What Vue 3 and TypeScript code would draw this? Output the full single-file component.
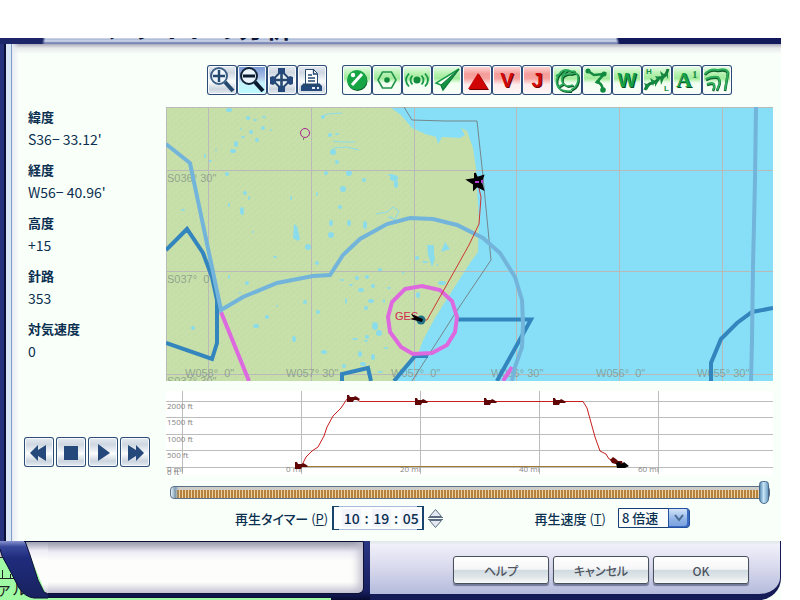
<script setup lang="ts">
import { ref } from 'vue'

interface Reading {
  label: string
  value: string
}

interface MapLabel {
  x: number
  y: number
  text: string
}

const readings: Reading[] = [
  { label: '緯度', value: "S36− 33.12'" },
  { label: '経度', value: "W56− 40.96'" },
  { label: '高度', value: '+15' },
  { label: '針路', value: '353' },
  { label: '対気速度', value: '0' },
]

const meridians = [208.5, 311.5, 414.5, 516.5, 619.5, 722.5]
const parallels = [170.5, 271.5, 374.5]

const mapLabels: MapLabel[] = [
  { x: 167, y: 182, text: 'S036° 30"' },
  { x: 167, y: 283, text: 'S037°  0"' },
  { x: 167, y: 385, text: 'S037° 30"' },
  { x: 185, y: 377, text: 'W058°  0"' },
  { x: 286, y: 377, text: 'W057° 30"' },
  { x: 391, y: 377, text: 'W057°  0"' },
  { x: 491, y: 377, text: 'W056° 30"' },
  { x: 596, y: 377, text: 'W056°  0"' },
  { x: 697, y: 377, text: 'W055° 30"' },
]

// Ponds on the plain: x, y, half width, half height
const ponds: number[][] = [
  [229, 110, 3, 2], [248, 118, 2, 2], [255, 120, 2, 1], [264, 117, 2, 1], [241, 129, 1, 1],
  [251, 132, 2, 2], [263, 128, 2, 2], [257, 140, 2, 2], [271, 130, 1, 1], [243, 137, 2, 1],
  [236, 144, 2, 3], [233, 151, 3, 2], [205, 156, 1, 2], [210, 161, 2, 1], [216, 150, 1, 1],
  [227, 174, 2, 2], [323, 117, 2, 2], [330, 135, 2, 2], [337, 134, 2, 1], [333, 152, 3, 3],
  [337, 162, 2, 2], [349, 173, 3, 3], [343, 189, 3, 3], [340, 207, 2, 2], [349, 223, 2, 3],
  [331, 223, 2, 3], [331, 235, 3, 3], [308, 247, 3, 3], [275, 257, 2, 1], [317, 263, 2, 2],
  [242, 211, 2, 4], [229, 205, 1, 2], [245, 193, 2, 2], [249, 198, 1, 2], [253, 232, 1, 1],
  [291, 198, 1, 2], [317, 194, 1, 2], [326, 173, 2, 2], [364, 180, 2, 2], [365, 225, 2, 4],
  [229, 277, 1, 2], [247, 283, 2, 2], [240, 293, 1, 1], [267, 317, 2, 2], [256, 326, 3, 2],
  [193, 328, 2, 2], [277, 306, 1, 1], [294, 339, 2, 3], [305, 302, 2, 2], [318, 312, 2, 2],
  [346, 301, 1, 3], [342, 280, 2, 1], [351, 285, 2, 1], [357, 278, 2, 2], [361, 290, 3, 2],
  [367, 277, 2, 2], [324, 352, 3, 2], [355, 339, 3, 1], [360, 354, 2, 3], [367, 337, 2, 2],
  [344, 366, 2, 2], [363, 364, 3, 2], [366, 341, 2, 1], [183, 210, 2, 1], [394, 178, 4, 3],
  [396, 184, 2, 4], [391, 175, 3, 1], [442, 283, 4, 2], [418, 295, 2, 3], [425, 262, 3, 1],
  [375, 326, 3, 4], [379, 333, 3, 3], [371, 301, 3, 2], [366, 308, 2, 2], [384, 301, 1, 2],
  [380, 270, 2, 2], [373, 286, 2, 2], [389, 288, 2, 1], [403, 273, 1, 1], [373, 357, 2, 3],
  [386, 348, 2, 1], [380, 372, 3, 1], [417, 258, 2, 2], [437, 265, 1, 1],
]

const altitudes = [
  { y: 401.5, text: '2000 ft' },
  { y: 417.5, text: '1500 ft' },
  { y: 434.5, text: '1000 ft' },
  { y: 450.5, text: '500 ft' },
  { y: 467.5, text: '0 ft' },
]

const distances = [
  { x: 182.5, label: 167, text: '0 mi' },
  { x: 301.5, label: 286, text: '0 mi' },
  { x: 420.5, label: 400, text: '20 mi' },
  { x: 539.5, label: 519, text: '40 mi' },
  { x: 658.5, label: 638, text: '60 mi' },
]

const profilePlanes = [
  [301, 465], [353, 398], [421, 401], [490, 401], [559, 401],
]

const position = ref(100)
const hours = ref('10')
const minutes = ref('19')
const seconds = ref('05')
const speed = ref('8 倍速')

function shiftSeconds(step: number): void {
  const total = Number(hours.value) * 3600 + Number(minutes.value) * 60 + Number(seconds.value) + step
  const day = (total + 86400) % 86400
  hours.value = String(Math.floor(day / 3600)).padStart(2, '0')
  minutes.value = String(Math.floor(day / 60) % 60).padStart(2, '0')
  seconds.value = String(day % 60).padStart(2, '0')
}
</script>

<template>
  <div class="screen">
    <div class="dialog">
      <header class="title-bar">
        <h1 class="title">フライトの分析</h1>
      </header>

      <div class="body">
        <aside class="sidebar">
          <dl class="readings">
            <div v-for="item in readings" :key="item.label" class="reading">
              <dt>{{ item.label }}</dt>
              <dd>{{ item.value }}</dd>
            </div>
          </dl>
          <div class="transport">
            <button type="button" class="tool" aria-label="巻き戻し">
              <svg viewBox="0 0 30 30"><path class="solid" d="M14 8v5l8-5v16l-8-5v5L6 16z" /></svg>
            </button>
            <button type="button" class="tool" aria-label="停止">
              <svg viewBox="0 0 30 30"><path class="solid" d="M8 9h14v14H8z" /></svg>
            </button>
            <button type="button" class="tool" aria-label="再生">
              <svg viewBox="0 0 30 30"><path class="solid" d="M10 7l12 9-12 8z" /></svg>
            </button>
            <button type="button" class="tool" aria-label="早送り">
              <svg viewBox="0 0 30 30"><path class="solid" d="M8 8l8 5V8l8 8-8 8v-5l-8 5z" /></svg>
            </button>
          </div>
        </aside>

        <main class="main">
          <div class="toolbar">
            <div class="tool-group">
              <button type="button" class="tool" aria-label="拡大">
                <svg viewBox="0 0 30 30">
                  <path d="M18 17l8 9" stroke="#25486f" stroke-width="4" />
                  <circle cx="12" cy="11" r="8" fill="#eef5fb" stroke="#3c5f87" stroke-width="2" />
                  <path d="M12 5v12M6 11h12" stroke="#25486f" stroke-width="2.4" />
                </svg>
              </button>
              <button type="button" class="tool active" aria-label="縮小">
                <svg viewBox="0 0 30 30">
                  <path d="M18 17l8 9" stroke="#0a1b30" stroke-width="4" />
                  <circle cx="12" cy="11" r="8" fill="#e9f4fc" stroke="#0f2238" stroke-width="2" />
                  <path d="M6 11h12" stroke="#0a1b30" stroke-width="3" />
                </svg>
              </button>
              <button type="button" class="tool" aria-label="移動">
                <svg viewBox="0 0 30 30">
                  <path d="M14.500 6l9 9-9 9-9-9z" fill="#eef3f8" stroke="#27496f" stroke-width="2" />
                  <path d="M14.500 9v12M8 15h13" stroke="#27496f" stroke-width="2.6" />
                  <path class="solid" d="M11 3h7v5l-2 1h-3l-2-1zM11 27h7v-5l-2-1h-3l-2 1zM3 12v7l3 1 3-2v-5l-3-2zM26 12v7l-3 1-3-2v-5l3-2z" />
                </svg>
              </button>
              <button type="button" class="tool" aria-label="印刷">
                <svg viewBox="0 0 30 30">
                  <path class="solid" d="M6 19h17l2 2v5H4v-5z" />
                  <path d="M8.500 4.500h8l4 4V20h-12z" fill="#fff" stroke="#25486f" />
                  <path d="M16.500 4v5h4M11 10h4M11 13h7M11 16h7" fill="none" stroke="#25486f" stroke-width="1.300" />
                  <path d="M6 20h17" stroke="#25486f" stroke-width="3" />
                  <path d="M15 23h3M20 23h2" stroke="#e5eef8" stroke-width="2" />
                </svg>
              </button>
            </div>

            <div class="tool-group">
              <button type="button" class="tool green" aria-label="空港">
                <svg viewBox="0 0 30 30">
                  <circle cx="15.500" cy="16" r="10" fill="#0b5b2a" />
                  <circle cx="15" cy="15" r="10" fill="#15a545" />
                  <path d="M10 20L20 9" stroke="#fff" stroke-width="3" />
                  <circle cx="11" cy="10" r="2.200" fill="#fff" />
                </svg>
              </button>
              <button type="button" class="tool green" aria-label="VOR">
                <svg viewBox="0 0 30 30">
                  <path d="M10.500 7h9l4.500 8-4.500 8h-9L6 15z" fill="none" stroke="#22934d" stroke-width="1.600" />
                  <circle cx="15" cy="15" r="2.800" fill="#128a3c" />
                </svg>
              </button>
              <button type="button" class="tool green" aria-label="NDB">
                <svg viewBox="0 0 30 30">
                  <circle cx="15" cy="15" r="3.500" fill="#128a3c" />
                  <path d="M10.500 10.500q-4 4.500 0 9M7 8.500q-6 6.500 0 13M19.500 10.500q4 4.500 0 9M23 8.500q6 6.500 0 13" fill="none" stroke="#1a9a48" stroke-width="1.800" />
                </svg>
              </button>
              <button type="button" class="tool green" aria-label="進入経路">
                <svg viewBox="0 0 30 30">
                  <path d="M27 4L4 18l5 2 2 5z" fill="#f4fff4" stroke="#179c48" stroke-width="1.500" />
                  <path d="M27 4L9 20l2 5z" fill="#159344" stroke="#12753a" stroke-width="1" />
                </svg>
              </button>
              <button type="button" class="tool red" aria-label="障害物">
                <svg viewBox="0 0 30 30">
                  <path d="M17 9l10 16H7z" fill="#690000" />
                  <path d="M16 8l10 16H6z" fill="#cf0505" />
                </svg>
              </button>
              <button type="button" class="tool red" aria-label="ビクター航空路">
                <svg viewBox="0 0 30 30">
                  <text class="glyph shadow-red" x="16" y="23">V</text>
                  <text class="glyph fill-red" x="15" y="22">V</text>
                </svg>
              </button>
              <button type="button" class="tool red" aria-label="ジェット航空路">
                <svg viewBox="0 0 30 30">
                  <text class="glyph shadow-red" x="16" y="23">J</text>
                  <text class="glyph fill-red" x="15" y="22">J</text>
                </svg>
              </button>
              <button type="button" class="tool green" aria-label="空域">
                <svg viewBox="0 0 30 30">
                  <path d="M23 6q-4 1-7-1-5-1-8 3-6 7-2 14 4 5 13 4M20 9q-8-1-10 4-1 6 5 8 3 0 6-1M16 5q-6 4-6 8M20 9q5-3 6 3 1 9-7 13M4 11l5-3M6 22l5-3" transform="translate(1 1)" fill="none" stroke="#0d592b" stroke-width="1.800" />
                  <path d="M23 6q-4 1-7-1-5-1-8 3-6 7-2 14 4 5 13 4M20 9q-8-1-10 4-1 6 5 8 3 0 6-1M16 5q-6 4-6 8M20 9q5-3 6 3 1 9-7 13M4 11l5-3M6 22l5-3" fill="none" stroke="#2bab59" stroke-width="1.700" />
                </svg>
              </button>
              <button type="button" class="tool green" aria-label="飛行経路">
                <svg viewBox="0 0 30 30">
                  <path d="M6 6l6 4 10-1-7 8q5 1 6 8" fill="none" stroke="#128a3f" stroke-width="2.600" />
                  <circle cx="6" cy="6" r="2.500" fill="#128a3f" />
                  <circle cx="22" cy="9" r="2.500" fill="#128a3f" />
                  <circle cx="16" cy="17" r="2" fill="#128a3f" />
                  <circle cx="21" cy="25" r="2.800" fill="#128a3f" />
                </svg>
              </button>
              <button type="button" class="tool green" aria-label="ウェイポイント">
                <svg viewBox="0 0 30 30">
                  <text class="glyph shadow-green" x="16" y="23">W</text>
                  <text class="glyph fill-green" x="15" y="22">W</text>
                </svg>
              </button>
              <button type="button" class="tool green" aria-label="気圧配置">
                <svg viewBox="0 0 30 30">
                  <path d="M3 25q2-6 7-7 5-1 7-5 7 0 9-9" fill="none" stroke="#157d3d" stroke-width="3" />
                  <path d="M2 18l6 2-3 5zM8 13l5 3-2 5zM13 11l5 1-2 4zM19 20l-1-8 4 1zM18 6l5 4-3 3zM13 22l0-6 3 1zM26 14l-3-6 3 0z" fill="#148a40" />
                  <text class="tiny-glyph" x="4" y="9">H</text>
                  <text class="tiny-glyph" x="22" y="26">L</text>
                </svg>
              </button>
              <button type="button" class="tool green" aria-label="ラベル">
                <svg viewBox="0 0 30 30">
                  <text class="serif-glyph shadow-green" x="13" y="23">A</text>
                  <text class="serif-glyph fill-green" x="12" y="22">A</text>
                  <text class="super-glyph" x="20" y="13">1</text>
                </svg>
              </button>
              <button type="button" class="tool green" aria-label="航跡">
                <svg viewBox="0 0 30 30">
                  <path d="M3 10q5-6 13-4 8-2 10 2l-3 18M4 15q6-3 12-2 3 4 1 8l-2 5M5 20q6-2 7 0 1 3-1 6" fill="none" stroke="#0f5d2c" stroke-width="2.600" />
                  <path d="M3 9q5-6 13-4 8-2 10 2l-3 18M4 14q6-3 12-2 3 4 1 8l-2 5M5 19q6-2 7 0 1 3-1 6" fill="none" stroke="#2faf5b" stroke-width="2" />
                </svg>
              </button>
            </div>
          </div>

          <svg class="map" viewBox="166 107 607 274" role="img" aria-label="地図">
            <defs>
              <pattern id="grain" width="7" height="6" patternUnits="userSpaceOnUse">
                <path d="M1 1h1M4 3h1M2 5h1M6 1h1" stroke="#cfe3ad" />
                <path d="M3 1h1M0 4h1M5 5h1" stroke="#c0dca6" />
              </pattern>
            </defs>
            <rect x="166" y="107" width="607" height="274" fill="#87dff7" />
            <g id="land">
              <path d="M166 107H390L401 115 412 128 425 134 436 137 438 144 442 137 460 138 465 135 461 128 467 131 473 148 476 168 477 190 479 220 478 252 470 263 452 291 435 318 423 340 418 354 394 381H166z" fill="#c6dfa9" />
              <path d="M166 107H390L412 128 436 137 420 200 450 230 465 240 475 254 435 315 418 354 394 381H166z" fill="url(#grain)" />
            </g>
            <g fill="#8bdcea">
              <ellipse v-for="(p, i) in ponds" :key="i" :cx="p[0]" :cy="p[1]" :rx="p[2]" :ry="p[3]" />
              <path d="M294 224l3 2 3 13-2 2-5-3zM427 245l7 0 0 8 1 6-3 8-4-12zM445 242l5 7-9 3z" />
            </g>
            <path d="M322 116l6-2 14-1M333 141l8 1 14 0M333 148l13-1 13 3M376 214l11-2 6-5 6 4-4 9-5-4M388 217l6 2" fill="none" stroke="#8bdcea" />

            <g stroke="#b9bab8">
              <path v-for="x in meridians" :key="x" :d="`M${x} 107V381`" />
              <path v-for="y in parallels" :key="y" :d="`M166 ${y}H773`" />
              <path d="M166 107.500H773M166.500 107V381" />
            </g>
            <text v-for="(l, i) in mapLabels" :key="i" class="map-label" :x="l.x" :y="l.y">{{ l.text }}</text>

            <path d="M404 107L412 120 445 121 477 121 482 167 491 260 458 309 412 381" fill="none" stroke="#74868c" />
            <g fill="none" stroke-width="4">
              <path d="M221 312L249 381M503 381L512 367" stroke="#dd69df" />
              <path d="M166 250L187 229 203 253 212 277 217 300 217 343 212 359 166 343M342 381V374L368 368 371 381M394 381L415 356H428M458 319.500H531L497 381M711 381V363L721 339 737 323 752 312 773 308" stroke="#3385bd" />
              <path d="M166 144L190 163 221 310 243 297 277 283 313 276 330 275 343 255 360 239 387 224 410 218 433 219 457 225 483 238 500 253 515 277 522 300 523 323 522 347 515 367 512 381M756 107L755 180 753 267 752 340 751 381" stroke="#73b4da" />
              <path d="M405 289L422 286 440 290 452 301 457 317 455 332 447 345 432 353 413 354 401 347 390 332 388 317 392 302z" stroke="#de69df" />
            </g>
            <path d="M478 184L481 197 479 224 469 245 427 320H421" fill="none" stroke="#c9372f" />
            <circle cx="305" cy="133" r="4.500" fill="none" stroke="#a5268c" />
            <path d="M303 139h1" stroke="#222" />
            <text class="map-station" x="395" y="320">GES</text>
            <circle cx="421" cy="320" r="4.500" fill="#217387" />
            <path d="M411 314l12 5-1 3-12-3 4-1z" fill="#000" />
            <path d="M475 173l2 5 6-2-2 6 2 7-6-3-3 3 0-5-6-4 7-1z" fill="#000" stroke="#000" stroke-width="2" />
            <path d="M475 182h4M482 180v3" stroke="#b642d5" stroke-width="2" />
          </svg>

          <svg class="profile" viewBox="166 391 607 84" role="img" aria-label="高度グラフ">
            <g stroke="#bcbcbc">
              <path v-for="a in altitudes" :key="a.y" :d="`M166 ${a.y}H774`" />
              <path v-for="d in distances" :key="d.x" :d="`M${d.x} 391V474`" />
            </g>
            <text v-for="a in altitudes" :key="a.text" class="axis" x="167" :y="a.y + 7">{{ a.text }}</text>
            <text v-for="d in distances" :key="d.x" class="axis" :x="d.label" y="472">{{ d.text }}</text>
            <path d="M306 466.500H617" stroke="#a17b35" />
            <path d="M302 465L306 457 312 451 318 447 324 436 327 427 333 416 341 408 347 399 356 399 360 401.500H583L587 408 595 437 600 451 606 454 609 459 613 460 617 464" fill="none" stroke="#c81e1e" />
            <path v-for="(p, i) in profilePlanes" :key="i" :transform="`translate(${p[0]} ${p[1]})`" d="M-6-3h2l1 2h4l1-1 2 1 3 2-1 1h-5l-1 2h-6z" fill="#5f0505" />
            <path d="M610 460l3-3 3 2 2 2 4 0 1 3-4 1-7-2z" fill="#650808" />
            <path d="M616 463l3-1 3 2 2-2 5 4-4 2-8 0z" fill="#000" />
          </svg>

          <input v-model.number="position" class="seek" type="range" min="0" max="100" aria-label="再生位置">

          <div class="settings">
            <div class="field">
              <label for="timer-hours">再生タイマー <span class="mnemonic">(<u>P</u>)</span></label>
              <div class="timer">
                <input id="timer-hours" v-model="hours" type="text" maxlength="2">
                <span>:</span>
                <input v-model="minutes" type="text" maxlength="2" aria-label="分">
                <span>:</span>
                <input v-model="seconds" type="text" maxlength="2" aria-label="秒">
              </div>
              <div class="spinner">
                <button type="button" aria-label="増やす" @click="shiftSeconds(1)">
                  <svg viewBox="0 0 17 10"><path d="M1 9.500h15M2.500 8.500l6-7 6 7z" /></svg>
                </button>
                <button type="button" aria-label="減らす" @click="shiftSeconds(-1)">
                  <svg viewBox="0 0 17 10"><path d="M1 .500h15M2.500 1.500l6 7 6-7z" /></svg>
                </button>
              </div>
            </div>
            <div class="field">
              <label for="speed">再生速度 <span class="mnemonic">(<u>T</u>)</span></label>
              <div class="speed">
                <select id="speed" v-model="speed">
                  <option>1 倍速</option>
                  <option>2 倍速</option>
                  <option>4 倍速</option>
                  <option>8 倍速</option>
                </select>
                <span class="arrow">
                  <svg viewBox="0 0 20 18"><path d="M6 6l4 5 4-5" /></svg>
                </span>
              </div>
            </div>
          </div>
        </main>
      </div>

      <footer class="footer">
        <svg class="corner" viewBox="0 0 48 59" aria-hidden="true">
          <defs>
            <linearGradient id="band" x1="0" y1="0" x2="0" y2="1">
              <stop offset="0" stop-color="#8993cf" />
              <stop offset=".1" stop-color="#39479a" />
              <stop offset=".3" stop-color="#1f2c7c" />
              <stop offset="1" stop-color="#18225f" />
            </linearGradient>
            <linearGradient id="inner" x1="0" y1="0" x2="0" y2="1">
              <stop offset="0" stop-color="#9496a8" />
              <stop offset=".18" stop-color="#edebf5" />
              <stop offset=".35" stop-color="#fdfdfb" />
              <stop offset=".8" stop-color="#fdfdfb" />
              <stop offset="1" stop-color="#c8c6d6" />
            </linearGradient>
          </defs>
          <path d="M0 0h48v16H0z" fill="#ccc8cc" />
          <path d="M0 16h48v43H0z" fill="#a0fca4" />
          <path d="M0 16.500h5M0 37.500h18M2.500 29v8M10.500 33v4" stroke="#222" />
          <text class="corner-text" x="-4" y="54">ァル</text>
          <path d="M24 0h24v53H46z" fill="url(#inner)" />
          <path d="M0 0h25l5 14 8 25 6 12 4 2v4H34q-9-1-15-10L7 24Q1 15 0 8z" fill="url(#band)" />
          <path d="M0 8q1 7 7 16l12 23q6 9 15 10h14" fill="none" stroke="#090d34" />
          <path d="M25 0l5 14 8 25 6 12 4 2" fill="none" stroke="#0c1136" />
          <path d="M24 .500h24" stroke="#0c1136" />
        </svg>
        <div class="info">
          <div class="info-panel"></div>
        </div>
        <div class="actions">
          <button type="button">ヘルプ</button>
          <button type="button">キャンセル</button>
          <button type="button">OK</button>
        </div>
      </footer>
    </div>
  </div>
</template>

<style>
body {
  background: #fff;
}
</style>

<style scoped>
.screen {
  box-sizing: border-box;
  min-height: 100vh;
  padding: 38px 19px 0 0;
  display: flex;
  color: #0b2f50;
  font-family: 'Noto Sans CJK JP', sans-serif;
  font-size: 13px;
}

.dialog {
  flex: 1;
  min-width: 0;
  display: flex;
  flex-direction: column;
  background: #f9fff9;
}

button,
input,
select {
  margin: 0;
  padding: 0;
  border: 0;
  color: inherit;
  font: inherit;
}

.title-bar {
  height: 6px;
  overflow: hidden;
  background:
    linear-gradient(100deg, #1b2568 42px, transparent 45px),
    linear-gradient(75deg, transparent calc(100% - 160px), #131a5c calc(100% - 157px)),
    linear-gradient(#d3dbeb, #a9b7d4 30%, #d8e0ee 50%, #8793bf 75%, #7680b1);
}

.title {
  height: 4px;
  margin: 0 0 0 103px;
  display: flex;
  align-items: flex-end;
  overflow: hidden;
  color: #0b1538;
  font-size: 27px;
  font-weight: 700;
  line-height: 30px;
}

.body {
  flex: 1;
  display: grid;
  grid-template-columns: 166px minmax(0, 1fr);
  padding-right: 8px;
  background:
    linear-gradient(90deg, #26327c 0 4px, #0b0f38 4px 6px, #dbe6f6 6px 11px, #7c9fc9 11px 12px, #e7e9f3 12px, transparent 19px),
    linear-gradient(#a9a9b8, #e6e9ea 4px, #f9fff9 10px);
}

.sidebar {
  padding: 62px 0 0 24px;
}

.readings {
  margin: 0 0 75px;
  padding-left: 4px;
  display: flex;
  flex-direction: column;
  gap: 9px;
}

.reading {
  line-height: 22px;
}

dt {
  font-weight: 600;
}

dd {
  margin: 0;
  font-size: 14px;
}

.transport {
  display: flex;
  gap: 2px;
}

.tool {
  width: 30px;
  height: 30px;
  flex: none;
  border-radius: 3px;
  background: linear-gradient(#e9edf3, #cfd7e1 25%, #e9eff3 45%, #fbfdfd 55%, #ccd5df 80%, #e8edf3);
  box-shadow: inset 0 0 0 1px #2c4c76, inset 0 0 0 2px #f6fafc;
}

.tool svg {
  display: block;
  width: 30px;
  height: 30px;
}

.tool.active {
  background: linear-gradient(#6e91d2, #a9bfe8 40%, #c5f2fb 60%, #b8fbff);
}

.tool.green {
  background: linear-gradient(#f3fff3, #b4f0ae 30%, #a3eb9c 45%, #f2fff0 60%, #fafffa);
}

.tool.red {
  background: linear-gradient(#fde6e4, #f49c99 30%, #f6a3a0 45%, #fdeceb 65%, #fff8f8);
}

.solid {
  fill: #25497a;
}

.glyph {
  font: 700 20px 'Liberation Sans', sans-serif;
  text-anchor: middle;
}

.serif-glyph {
  font: 700 22px 'Liberation Serif', serif;
  text-anchor: middle;
}

.tiny-glyph {
  font: 700 8px 'Liberation Sans', sans-serif;
  fill: #168c42;
}

.super-glyph {
  font: 700 11px 'Liberation Serif', serif;
  fill: #168c42;
}

.fill-red {
  fill: #d00a0a;
}

.shadow-red {
  fill: #650000;
}

.fill-green {
  fill: #15a048;
}

.shadow-green {
  fill: #0b4d25;
}

.main {
  padding: 21px 0 11px;
  display: flex;
  flex-direction: column;
}

.toolbar {
  display: flex;
  gap: 15px;
  margin: 0 0 12px 41px;
}

.tool-group {
  display: flex;
}

.map,
.profile {
  display: block;
  width: 100%;
  height: auto;
}

.map {
  margin-bottom: 10px;
}

.map-label {
  font: 11px 'Liberation Sans', sans-serif;
  fill: #7e8f86;
  fill-opacity: .75;
  white-space: pre;
}

.map-station {
  font: 11px 'Liberation Sans', sans-serif;
  fill: #d3274d;
}

.profile {
  margin-bottom: 5px;
  background: #fff;
}

.axis {
  font: 8px 'Open Sans', sans-serif;
  fill: #858585;
}

.seek {
  appearance: none;
  width: calc(100% - 7px);
  height: 24px;
  margin: 0 3px 0 4px;
  background: transparent;
}

.seek::-webkit-slider-runnable-track {
  height: 13px;
  box-sizing: border-box;
  border: 1px solid #5a7188;
  border-radius: 4px;
  background:
    linear-gradient(90deg, #e9f6fc 0, #7e9fb5 4px, transparent 8px),
    linear-gradient(#cfcdc8 3px, transparent 3px),
    repeating-linear-gradient(90deg, #b5813c 0 2px, #ecd3a4 2px 3px);
}

.seek::-webkit-slider-thumb {
  appearance: none;
  box-sizing: border-box;
  width: 10px;
  height: 23px;
  margin-top: -6px;
  border: 1px solid #48698b;
  border-radius: 4px 4px 6px 6px;
  background: linear-gradient(90deg, #5b8db5, #c8e6f8 45%, #6d9dc2);
}

.settings {
  display: flex;
  justify-content: space-between;
  align-items: center;
  height: 24px;
  margin-top: 2px;
  padding: 0 83px 0 69px;
}

.field {
  display: flex;
  align-items: center;
  font-weight: 500;
}

.field label {
  font-feature-settings: 'palt';
}

.mnemonic {
  font-weight: 400;
}

.timer {
  box-sizing: border-box;
  width: 92px;
  height: 24px;
  margin-left: 4px;
  padding: 0 2px 0 8px;
  display: flex;
  align-items: center;
  justify-content: space-between;
  border: solid #17446f;
  border-width: 0 2px;
  background:
    linear-gradient(90deg, #17446f 5px, #a9bdda 5px calc(100% - 5px), #17446f calc(100% - 5px)) top / 100% 1px no-repeat,
    linear-gradient(90deg, #17446f 5px, #a9bdda 5px calc(100% - 5px), #17446f calc(100% - 5px)) bottom / 100% 1px no-repeat,
    #fbfefd;
  font-size: 14px;
}

.timer input {
  width: 19px;
  height: 18px;
  background: #f4f5fb;
  text-align: center;
}

.spinner {
  display: grid;
  gap: 1px;
  margin-left: 3px;
}

.spinner button {
  width: 17px;
  height: 10px;
  background: transparent;
}

.spinner svg {
  display: block;
  width: 17px;
  height: 10px;
  fill: #e3e9f2;
  stroke: #5c6d80;
}

.speed {
  display: grid;
  grid-template-columns: 50px 22px;
  margin-left: 12px;
  height: 20px;
}

.speed select {
  appearance: none;
  grid-area: 1 / 1 / 2 / 3;
  height: 20px;
  padding-left: 3px;
  box-sizing: border-box;
  border: 1px solid #173f75;
  border-radius: 0 4px 4px 0;
  background: #fbfefd;
  line-height: 18px;
}

.arrow {
  grid-area: 1 / 2;
  box-sizing: border-box;
  height: 20px;
  border: 1px solid #2450a0;
  border-radius: 0 4px 4px 0;
  background: linear-gradient(#d4e4f8, #8db1e6 60%, #78a0dd);
  box-shadow: inset -2px -1px 0 #386ac2;
  pointer-events: none;
}

.arrow svg {
  display: block;
  width: 20px;
  height: 18px;
  fill: none;
  stroke: #46688f;
  stroke-width: 2;
}

.footer {
  display: flex;
  height: 59px;
  background: linear-gradient(90deg, #151b57 60%, transparent 60%);
}

.corner {
  flex: none;
  width: 48px;
  height: 59px;
}

.corner-text {
  font: 16px 'Noto Sans CJK JP', sans-serif;
  fill: #222;
}

.info {
  flex: 1 1 322px;
  box-sizing: border-box;
  padding: 0 6px 6px 0;
  background:
    linear-gradient(#a0fca4, #a0fca4) left bottom / 283px 2px no-repeat,
    linear-gradient(#2c3784, #171f60 85%, #080c32);
}

.info-panel {
  height: 53px;
  box-sizing: border-box;
  border-top: 1px solid #0c1136;
  border-bottom: 1px solid #0c1136;
  border-right: 1px solid #0c1136;
  border-radius: 0 2px 6px 0;
  background: linear-gradient(#9496a8, #edebf5 10px, #fdfdfb 19px, #fdfdfb 40px, #c8c6d6);
  box-shadow: inset -7px 0 8px -3px #bdbbcc;
}

.actions {
  flex: 1 1 411px;
  box-sizing: border-box;
  padding: 15px 31px 0 0;
  display: flex;
  justify-content: flex-end;
  gap: 4px;
  border-bottom: 6px solid #151b57;
  border-right: 1px solid #151b57;
  border-radius: 0 0 22px 0;
  background: linear-gradient(#e4e9ec 2px, #f1f0fa 3px, #d8d9ed 50%, #b5bbdc);
}

.actions button {
  width: 96px;
  height: 28px;
  border: 1px solid #48505c;
  border-radius: 3px;
  background: linear-gradient(#fff, #f6f6f8 47%, #d0dbe1 52%, #dfe6e8 75%, #fafafa);
  box-shadow: 0 2px 1px #747a9b;
  color: #4e555f;
  font-size: 12px;
  font-weight: 500;
  font-feature-settings: 'palt';
}
</style>
